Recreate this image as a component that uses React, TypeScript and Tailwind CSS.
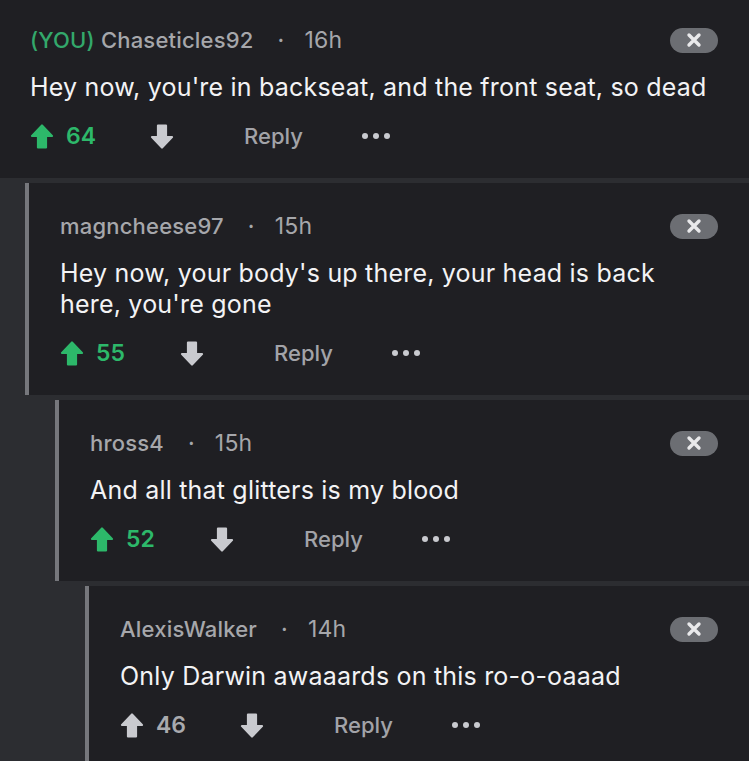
import React from "react";

type C = {
  you?: boolean;
  user: string;
  time: string;
  body: string;
  votes: number;
  voted: boolean;
  ml: string;
  top?: boolean;
};

const comments: C[] = [
  { you: true, user: "Chaseticles92", time: "16h", body: "Hey now, you're in backseat, and the front seat, so dead", votes: 64, voted: true, ml: "", top: true },
  { user: "magncheese97", time: "15h", body: "Hey now, your body's up there, your head is back here, you're gone", votes: 55, voted: true, ml: "ml-[25px]" },
  { user: "hross4", time: "15h", body: "And all that glitters is my blood", votes: 52, voted: true, ml: "ml-[55px]" },
  { user: "AlexisWalker", time: "14h", body: "Only Darwin awaaards on this ro-o-oaaad", votes: 46, voted: false, ml: "ml-[85px]" },
];

function Arrow({ up, color }: { up: boolean; color: string }) {
  return (
    <svg width="24" height="27" viewBox="0 0 24 26" style={{ transform: up ? undefined : "rotate(180deg)" }}>
      <path
        d="M12 2 L22 12.5 H16 V24 H8 V12.5 H2 Z"
        fill={color}
        stroke={color}
        strokeWidth="2.2"
        strokeLinejoin="round"
      />
    </svg>
  );
}

function CloseIcon() {
  return (
    <div className="w-[48px] h-[25px] rounded-full bg-[#6c6e73] flex items-center justify-center">
      <svg width="16" height="16" viewBox="0 0 16 16">
        <path d="M3 3 L13 13 M13 3 L3 13" stroke="#e9e9eb" strokeWidth="3.4" strokeLinecap="round" />
      </svg>
    </div>
  );
}

function Comment({ c }: { c: C }) {
  return (
    <div
      className={`${c.ml} bg-[#1f1f23] ${c.top ? "pl-[30px] pt-[26px]" : "border-l-4 border-[#76777c] pl-[31px] pt-[29px]"} pr-[31px] pb-[26px]`}
    >
      <div className="h-[28px] flex items-center justify-between">
        <div className="flex items-center text-[22px] tracking-[0.2px] font-medium text-[#a6a7ab]">
          {c.you && <span className="text-[#33a86b] mr-[6px]">(YOU)</span>}
          <span>{c.user}</span>
          <span className="ml-[24px] mr-[20px] text-[#a6a7ab]">·</span>
          <span className="text-[23px] font-normal">{c.time}</span>
        </div>
        <CloseIcon />
      </div>
      <div className="mt-[18px] text-[25px] tracking-[0.2px] leading-[31px] text-[#f3f3f5]">{c.body}</div>
      <div className="mt-[17px] h-[32px] flex items-center">
        <div className="w-[36px] flex items-center">
          <Arrow up color={c.voted ? "#2db86a" : "#c9cacf"} />
        </div>
        <div className={`w-[84px] text-[23px] font-semibold ${c.voted ? "text-[#2db86a]" : "text-[#a9aaae]"}`}>
          {c.votes}
        </div>
        <div className="w-[94px] flex items-center">
          <Arrow up={false} color="#c9cacf" />
        </div>
        <div className="w-[118px] text-[22px] font-medium text-[#a2a3a8]">Reply</div>
        <div className="flex items-center gap-[5px]">
          <span className="w-[6px] h-[6px] rounded-full bg-[#c9cacf]" />
          <span className="w-[6px] h-[6px] rounded-full bg-[#c9cacf]" />
          <span className="w-[6px] h-[6px] rounded-full bg-[#c9cacf]" />
        </div>
      </div>
    </div>
  );
}

export default function App() {
  return (
    <div
      className="w-[749px] h-[761px] overflow-hidden bg-[#2c2d31] flex flex-col gap-[5px]"
      style={{ fontFamily: "Inter, 'Noto Sans', sans-serif" }}
    >
      {comments.map((c, i) => (
        <Comment key={i} c={c} />
      ))}
    </div>
  );
}
